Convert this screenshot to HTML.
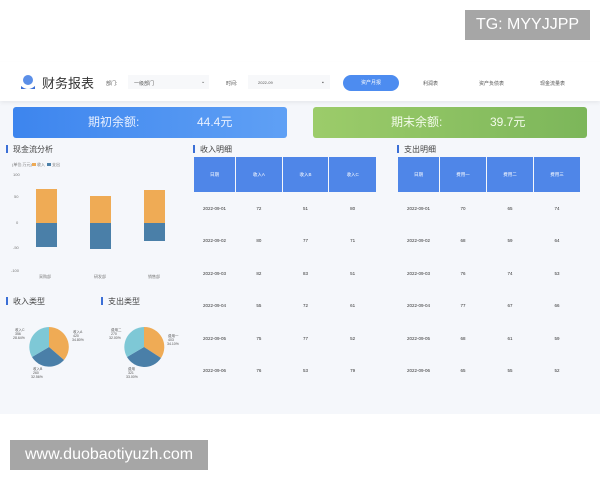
<!DOCTYPE html>
<html><head><meta charset="utf-8"><style>
*{margin:0;padding:0;box-sizing:border-box}
body{width:600px;height:480px;background:#fff;font-family:"Liberation Sans","Noto Sans CJK SC",sans-serif;position:relative;overflow:hidden;color:#333}
.a{position:absolute}
.dash{left:0;top:62px;width:600px;height:352px;background:#f5f7fb}
.hdr{left:0;top:62px;width:600px;height:39px;background:#fff;box-shadow:0 2px 4px rgba(0,0,0,.06)}
.s{font-size:5px;color:#555}
.ttl{font-size:8px;color:#444}
.ttl:before{content:"";display:inline-block;width:2px;height:8px;background:#3b6fd6;margin-right:5px;vertical-align:-1px}
table{border-collapse:separate;border-spacing:1px 0;font-size:4.5px;color:#333;text-align:center}
th{background:#4f86e8;color:#fff;font-weight:normal;height:35px}
td{height:32.5px}
</style></head><body>
<div class="a" style="left:465px;top:10px;width:125px;height:30px;background:#a6a6a6;color:#fff;font-size:16px;line-height:30px;text-align:center">TG: MYYJJPP</div>
<div class="a dash"></div>
<div class="a hdr"></div>
<svg class="a" style="left:19px;top:73px" width="18" height="18" viewBox="0 0 18 18"><circle cx="9" cy="7" r="5" fill="#5b8fe8"/><path d="M2 13 Q9 19 16 13 L16 16 L2 16Z" fill="#3b6fd6"/></svg>
<div class="a" style="left:42px;top:73px;font-size:13px;color:#333">财务报表</div>
<div class="a s" style="left:106px;top:80px">部门:</div>
<div class="a" style="left:128px;top:75px;width:81px;height:14px;background:#f7f8fa"></div>
<div class="a s" style="left:134px;top:80px">一级部门</div>
<div class="a s" style="left:201px;top:79px">⌄</div>
<div class="a s" style="left:226px;top:80px">时间:</div>
<div class="a" style="left:248px;top:75px;width:82px;height:14px;background:#f7f8fa"></div>
<div class="a s" style="left:258px;top:80px;font-size:4px">2022-09</div>
<div class="a s" style="left:322px;top:80px">▪</div>
<div class="a" style="left:343px;top:75px;width:56px;height:16px;border-radius:8px;background:#4d8cf0;color:#fff;font-size:5px;text-align:center;line-height:16px">资产月报</div>
<div class="a s" style="left:423px;top:80px">利润表</div>
<div class="a s" style="left:479px;top:80px">资产负债表</div>
<div class="a s" style="left:540px;top:80px">现金流量表</div>
<div class="a" style="left:13px;top:107px;width:274px;height:31px;border-radius:3px;background:linear-gradient(90deg,#3d85ee,#5fa0f5);color:#e8f0ff;font-size:12px;line-height:31px"><span style="position:absolute;left:75px">期初余额:</span><span style="position:absolute;left:184px">44.4元</span></div>
<div class="a" style="left:313px;top:107px;width:274px;height:31px;border-radius:3px;background:linear-gradient(90deg,#9ccc6a,#7cb65a);color:#f3fbea;font-size:12px;line-height:31px"><span style="position:absolute;left:78px">期末余额:</span><span style="position:absolute;left:177px">39.7元</span></div>
<div class="a ttl" style="left:6px;top:144px">现金流分析</div>
<div class="a ttl" style="left:193px;top:144px">收入明细</div>
<div class="a ttl" style="left:397px;top:144px">支出明细</div>
<svg class="a" style="left:0;top:155px" width="190" height="130" viewBox="0 155 190 130" font-size="4" fill="#777">
<text x="12" y="166">(单位:万元)</text><rect x="32" y="163" width="4" height="3" fill="#eeaa55"/><text x="37" y="166">收入</text><rect x="47" y="163" width="4" height="3" fill="#4a7fa8"/><text x="52" y="166">支出</text>
<text x="13" y="176">100</text><text x="14" y="198">50</text><text x="16" y="224">0</text><text x="13" y="249">-50</text><text x="11" y="272">-100</text>
<rect x="36" y="189" width="21" height="34" fill="#efab55"/><rect x="36" y="223" width="21" height="24" fill="#4a7fa8"/>
<rect x="90" y="196" width="21" height="27" fill="#efab55"/><rect x="90" y="223" width="21" height="26" fill="#4a7fa8"/>
<rect x="144" y="190" width="21" height="33" fill="#efab55"/><rect x="144" y="223" width="21" height="18" fill="#4a7fa8"/>
<text x="39" y="278">采购部</text><text x="94" y="278">研发部</text><text x="148" y="278">销售部</text>
</svg>
<div class="a ttl" style="left:6px;top:296px">收入类型</div>
<div class="a ttl" style="left:101px;top:296px">支出类型</div>
<svg class="a" style="left:0;top:320px" width="190" height="60" viewBox="0 320 190 60" font-size="3.5" fill="#555">
<g transform="translate(49,347)"><path d="M0 0L0-20A20 20 0 0 1 15 13Z" fill="#efab55"/><path d="M0 0L15 13A20 20 0 0 1-17 10Z" fill="#4a7fa8"/><path d="M0 0L-17 10A20 20 0 0 1 0-20Z" fill="#7ec8d6"/></g>
<g transform="translate(144,347)"><path d="M0 0L0-20A20 20 0 0 1 17 11Z" fill="#efab55"/><path d="M0 0L17 11A20 20 0 0 1-17 10Z" fill="#4a7fa8"/><path d="M0 0L-17 10A20 20 0 0 1 0-20Z" fill="#7ec8d6"/></g>
<text x="15" y="331">收入C</text><text x="15" y="335">356</text><text x="13" y="339">28.64%</text>
<text x="73" y="333">收入A</text><text x="73" y="337">420</text><text x="72" y="341">34.80%</text>
<text x="33" y="370">收入B</text><text x="33" y="374">260</text><text x="31" y="378">32.56%</text>
<text x="111" y="331">费用二</text><text x="111" y="335">270</text><text x="109" y="339">32.00%</text>
<text x="168" y="337">费用一</text><text x="168" y="341">403</text><text x="167" y="345">34.10%</text>
<text x="128" y="370">费用</text><text x="128" y="374">321</text><text x="126" y="378">33.00%</text>
</svg>
<table class="a" style="left:193px;top:157px;width:184px"><tr><th style="width:41px">日期</th><th>收入A</th><th>收入B</th><th>收入C</th></tr>
<tr><td>2022-09-01</td><td>72</td><td>51</td><td>80</td></tr><tr><td>2022-09-02</td><td>80</td><td>77</td><td>71</td></tr><tr><td>2022-09-03</td><td>82</td><td>83</td><td>51</td></tr><tr><td>2022-09-04</td><td>55</td><td>72</td><td>61</td></tr><tr><td>2022-09-05</td><td>75</td><td>77</td><td>52</td></tr><tr><td>2022-09-06</td><td>76</td><td>53</td><td>79</td></tr></table>
<table class="a" style="left:397px;top:157px;width:184px"><tr><th style="width:41px">日期</th><th>费用一</th><th>费用二</th><th>费用三</th></tr>
<tr><td>2022-09-01</td><td>70</td><td>65</td><td>74</td></tr><tr><td>2022-09-02</td><td>68</td><td>59</td><td>64</td></tr><tr><td>2022-09-03</td><td>76</td><td>74</td><td>53</td></tr><tr><td>2022-09-04</td><td>77</td><td>67</td><td>66</td></tr><tr><td>2022-09-05</td><td>68</td><td>61</td><td>59</td></tr><tr><td>2022-09-06</td><td>65</td><td>55</td><td>52</td></tr></table>
<div class="a" style="left:10px;top:440px;width:198px;height:30px;background:#a6a6a6;color:#fff;font-size:16px;line-height:30px;text-align:center">www.duobaotiyuzh.com</div>
</body></html>
